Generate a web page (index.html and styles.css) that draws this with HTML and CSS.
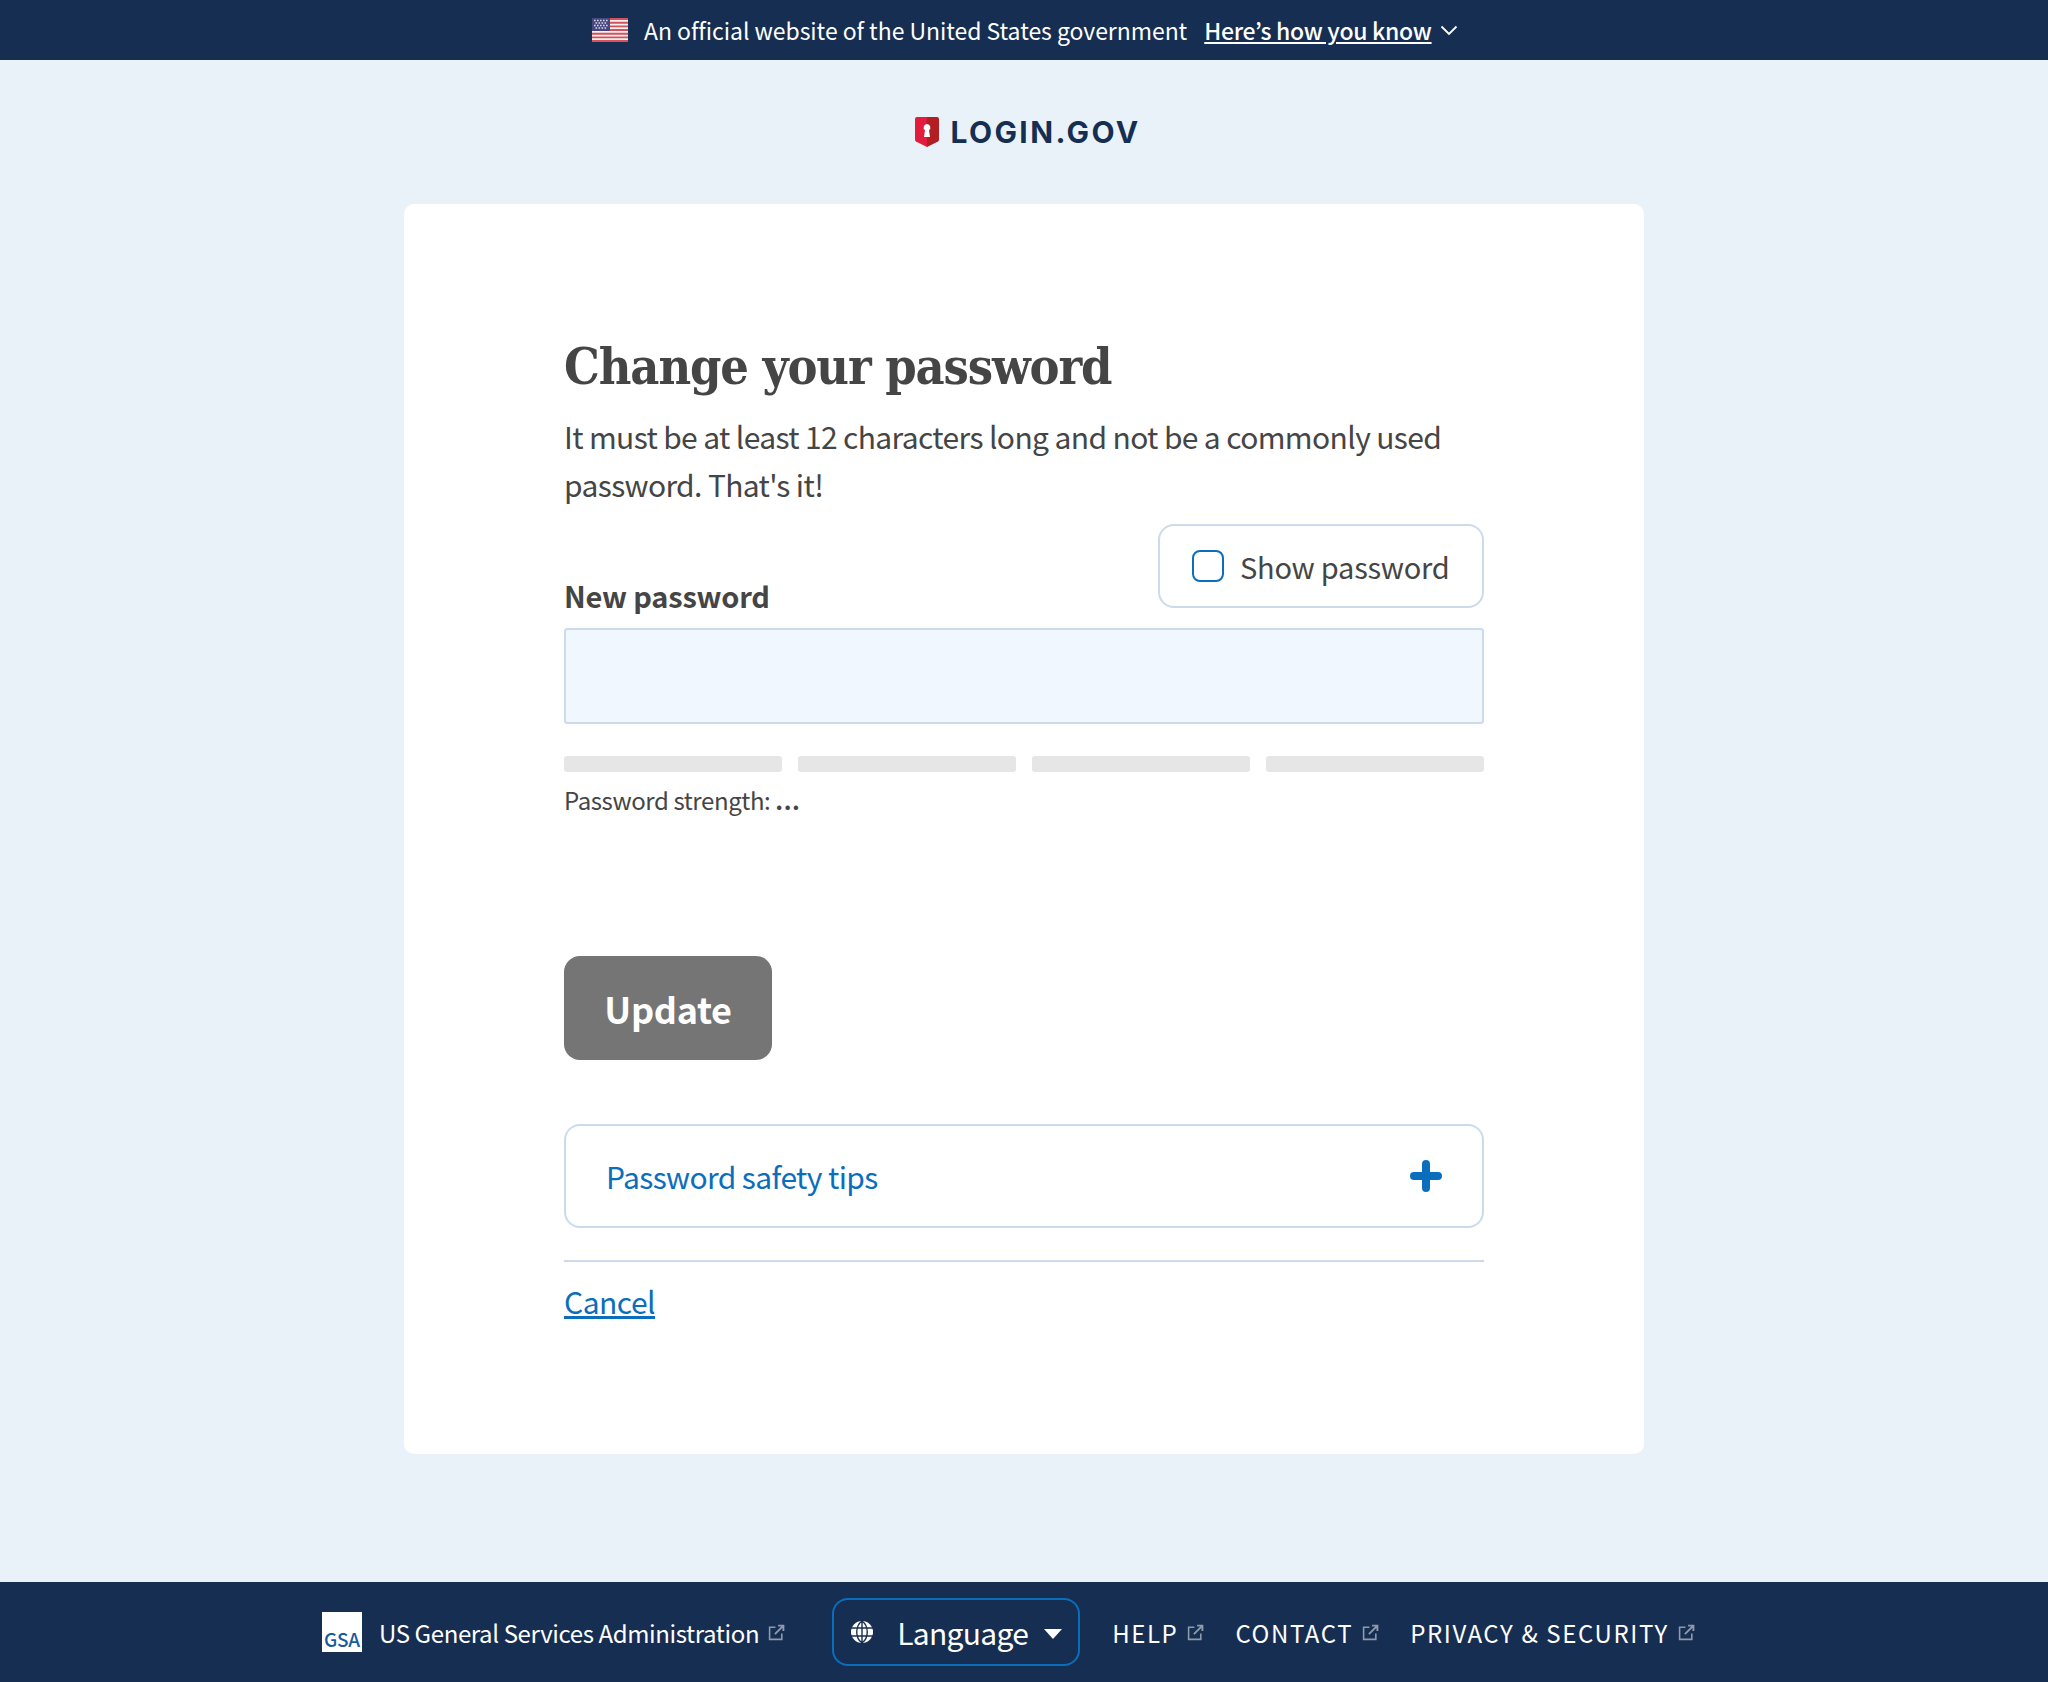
FILE: index.html
```html
<!DOCTYPE html>
<html lang="en">
<head>
    <meta charset="UTF-8">
    <title>Change your password | Login.gov</title>
    <link rel="stylesheet" href="styles.css">
</head>
<body>
    <div class="gov-banner">
        <svg class="flag" width="36" height="24" viewBox="0 0 36 24">
            <rect width="36" height="24" fill="#f4f1f1"/>
            <path d="M0 1h36M0 4.700h36M0 8.400h36M0 12h36M0 15.700h36M0 19.400h36M0 23h36" stroke="#d5525c" stroke-width="1.900"/>
            <rect width="18" height="13" fill="#47477f"/>
            <path d="M2 2.500h14M3.500 5h11M2 7.500h14M3.500 10h11" stroke="#d8d8e8" stroke-width="1.400" stroke-dasharray="1.600 1.400"/>
        </svg>
        <span class="gov-text">An official website of the United States government</span>
        <a class="gov-link" href="#">Here’s how you know</a>
        <svg class="chevron" width="18" height="11" viewBox="0 0 18 11"><path d="M1.500 1.500 9 9l7.500-7.500" fill="none" stroke="#fff" stroke-width="1.800"/></svg>
    </div>

    <main class="page">
        <div class="logo">
            <svg width="24" height="30" viewBox="0 0 24 30">
                <path d="M2 0h10v30L1 24.500Q0 24 0 22V2Q0 0 2 0z" fill="#e21c3d"/>
                <path d="M12 0h10q2 0 2 2v20q0 2-1 2.500L12 30z" fill="#b31e22"/>
                <path d="M12 7a3.500 3.500 0 0 1 2 6.300l1 6.700H9l1-6.700A3.500 3.500 0 0 1 12 7z" fill="#fff"/>
            </svg>
            <span class="logo-text">LOGIN.GOV</span>
        </div>

        <div class="card">
            <h1>Change your password</h1>
            <p class="intro">It must be at least 12 characters long and not be a commonly used password. That's it!</p>

            <div class="field-head">
                <label class="field-label" for="newPassword">New password</label>
                <div class="show-password">
                    <span class="checkbox"></span>
                    <span>Show password</span>
                </div>
            </div>
            <input class="password-input" id="newPassword" type="password">

            <div class="strength-bars">
                <div class="strength-bar"></div>
                <div class="strength-bar"></div>
                <div class="strength-bar"></div>
                <div class="strength-bar"></div>
            </div>
            <div class="strength-text">Password strength: <b>...</b></div>

            <button class="update-btn" type="button">Update</button>

            <div class="accordion">
                <span>Password safety tips</span>
                <svg width="32" height="32" viewBox="0 0 32 32"><path d="M16 4v24M4 16h24" stroke="#0b6ebd" stroke-width="8" stroke-linecap="round"/></svg>
            </div>

            <div class="cancel-row"><a href="#">Cancel</a></div>
        </div>
    </main>

    <footer class="footer">
        <div class="gsa-logo"><span>GSA</span></div>
        <a class="footer-gsa" href="#">US General Services Administration</a>
        <svg class="ext-icon" viewBox="0 0 16 16"><path d="M7 3H1.500v11.500H13V9" fill="none" stroke="#8f9aab" stroke-width="1.500"/><path d="M9.500 1.500h5v5M14.500 1.500 6.500 9.500" fill="none" stroke="#8f9aab" stroke-width="1.800"/></svg>

        <div class="language">
            <svg width="24" height="24" viewBox="0 0 24 24">
                <circle cx="12" cy="12" r="11" fill="#fff"/>
                <path d="M1 8h22M1 16h22M12 1v22M12 1C5 6 5 18 12 23M12 1c7 5 7 17 0 22" fill="none" stroke="#162e51" stroke-width="1.400"/>
            </svg>
            <span class="language-text">Language</span>
            <span class="caret"></span>
        </div>

        <a class="footer-link" href="#">HELP</a>
        <svg class="ext-icon" viewBox="0 0 16 16"><path d="M7 3H1.500v11.500H13V9" fill="none" stroke="#8f9aab" stroke-width="1.500"/><path d="M9.500 1.500h5v5M14.500 1.500 6.500 9.500" fill="none" stroke="#8f9aab" stroke-width="1.800"/></svg>
        <a class="footer-link" href="#">CONTACT</a>
        <svg class="ext-icon" viewBox="0 0 16 16"><path d="M7 3H1.500v11.500H13V9" fill="none" stroke="#8f9aab" stroke-width="1.500"/><path d="M9.500 1.500h5v5M14.500 1.500 6.500 9.500" fill="none" stroke="#8f9aab" stroke-width="1.800"/></svg>
        <a class="footer-link" href="#">PRIVACY &amp; SECURITY</a>
        <svg class="ext-icon" viewBox="0 0 16 16"><path d="M7 3H1.500v11.500H13V9" fill="none" stroke="#8f9aab" stroke-width="1.500"/><path d="M9.500 1.500h5v5M14.500 1.500 6.500 9.500" fill="none" stroke="#8f9aab" stroke-width="1.800"/></svg>
    </footer>
</body>
</html>
```

FILE: styles.css
```css
* {
    box-sizing: border-box;
}

body {
    margin: 0;
    min-height: 1682px;
    display: flex;
    flex-direction: column;
    background-color: #e9f2f9;
    color: #454545;
    font-family: "Noto Sans CJK JP", "Open Sans", sans-serif;
}

.gov-banner {
    height: 60px;
    background-color: #162e51;
    color: white;
    display: flex;
    align-items: center;
    padding-left: 592px;
    font-size: 23px;
    white-space: nowrap;
}

.flag {
    margin-right: 16px;
}

.gov-text {
    letter-spacing: -0.050px;
}

.gov-link {
    margin-left: 17px;
    color: white;
    font-weight: 500;
    letter-spacing: -0.300px;
    text-decoration: underline;
}

.chevron {
    margin-left: 8px;
}

.page {
    flex: 1;
    display: flex;
    flex-direction: column;
    align-items: center;
}

.logo {
    height: 144px;
    padding-left: 8px;
    display: flex;
    align-items: center;
    gap: 11px;
}

.logo-text {
    font-family: Inter, sans-serif;
    font-weight: 700;
    font-size: 30px;
    letter-spacing: 2.400px;
    color: #162e51;
}

.card {
    width: 1240px;
    height: 1250px;
    background-color: white;
    border-radius: 10px;
    padding: 128px 160px 0;
}

h1 {
    margin: 0 0 10px;
    font-family: "DejaVu Serif Condensed", "DejaVu Serif", serif;
    font-size: 50px;
    letter-spacing: -1.100px;
    line-height: 70px;
    color: #454545;
}

.intro {
    margin: 0;
    font-size: 30px;
    letter-spacing: -0.630px;
    line-height: 48px;
}

.field-head {
    display: flex;
    justify-content: space-between;
    align-items: flex-end;
    margin-top: 16px;
}

.field-label {
    font-size: 29px;
    font-weight: 700;
    letter-spacing: -0.200px;
    line-height: 40px;
    margin-bottom: -7px;
}

.show-password {
    width: 326px;
    height: 84px;
    border: 2px solid #ccdaec;
    border-radius: 16px;
    display: flex;
    align-items: center;
    padding-left: 32px;
    gap: 16px;
    font-size: 29px;
    letter-spacing: -0.250px;
}

.checkbox {
    width: 32px;
    height: 32px;
    border: 2px solid #0b6ebd;
    border-radius: 8px;
}

.password-input {
    display: block;
    width: 100%;
    height: 96px;
    margin-top: 20px;
    background-color: #f0f7ff;
    border: 2px solid #ccdaec;
    border-radius: 3px;
}

.strength-bars {
    display: flex;
    gap: 16px;
    margin-top: 32px;
}

.strength-bar {
    flex: 1;
    height: 16px;
    background-color: #e6e6e6;
    border-radius: 3px;
}

.strength-text {
    margin-top: 12px;
    font-size: 24px;
    letter-spacing: -0.400px;
    line-height: 32px;
}

.strength-text b {
    letter-spacing: 0.500px;
}

.update-btn {
    display: block;
    width: 208px;
    height: 104px;
    margin-top: 140px;
    background-color: #757575;
    color: white;
    border: none;
    border-radius: 16px;
    font-family: inherit;
    font-size: 36px;
    font-weight: 700;
    letter-spacing: -0.300px;
}

.accordion {
    height: 104px;
    margin-top: 64px;
    border: 2px solid #ccdaec;
    border-radius: 16px;
    display: flex;
    justify-content: space-between;
    align-items: center;
    padding: 0 40px;
    color: #0b6ebd;
    font-size: 30px;
    letter-spacing: -0.600px;
}

.cancel-row {
    margin-top: 32px;
    border-top: 2px solid #ccdaec;
    padding-top: 17px;
    font-size: 30px;
    letter-spacing: -0.500px;
    line-height: 44px;
}

.cancel-row a {
    color: #0b6ebd;
}

.footer {
    height: 100px;
    background-color: #162e51;
    color: white;
    display: flex;
    align-items: center;
    padding-left: 322px;
    font-size: 24px;
}

.footer a {
    color: white;
    text-decoration: none;
}

.footer-gsa {
    letter-spacing: -0.380px;
}

.gsa-logo {
    width: 40px;
    height: 40px;
    background-color: white;
    color: #1a5a9c;
    font-size: 19px;
    font-weight: 500;
    letter-spacing: -0.300px;
    display: flex;
    align-items: flex-end;
    justify-content: center;
    line-height: 22px;
    padding-bottom: 2px;
    margin-right: 17px;
}

.ext-icon {
    width: 17px;
    height: 17px;
    margin-left: 9px;
}

.language {
    width: 248px;
    height: 68px;
    margin: 0 32px 0 47px;
    border: 2px solid #0b6ebd;
    border-radius: 16px;
    display: flex;
    align-items: center;
    padding-left: 16px;
}

.language-text {
    font-size: 30px;
    letter-spacing: -0.700px;
    margin-left: 23px;
}

.caret {
    width: 0;
    height: 0;
    margin-left: 16px;
    margin-top: 4px;
    border-left: 9px solid transparent;
    border-right: 9px solid transparent;
    border-top: 10px solid white;
}

.footer-link {
    font-size: 24px;
    letter-spacing: 1.600px;
}

.footer .ext-icon + .footer-link {
    margin-left: 31px;
}
```
